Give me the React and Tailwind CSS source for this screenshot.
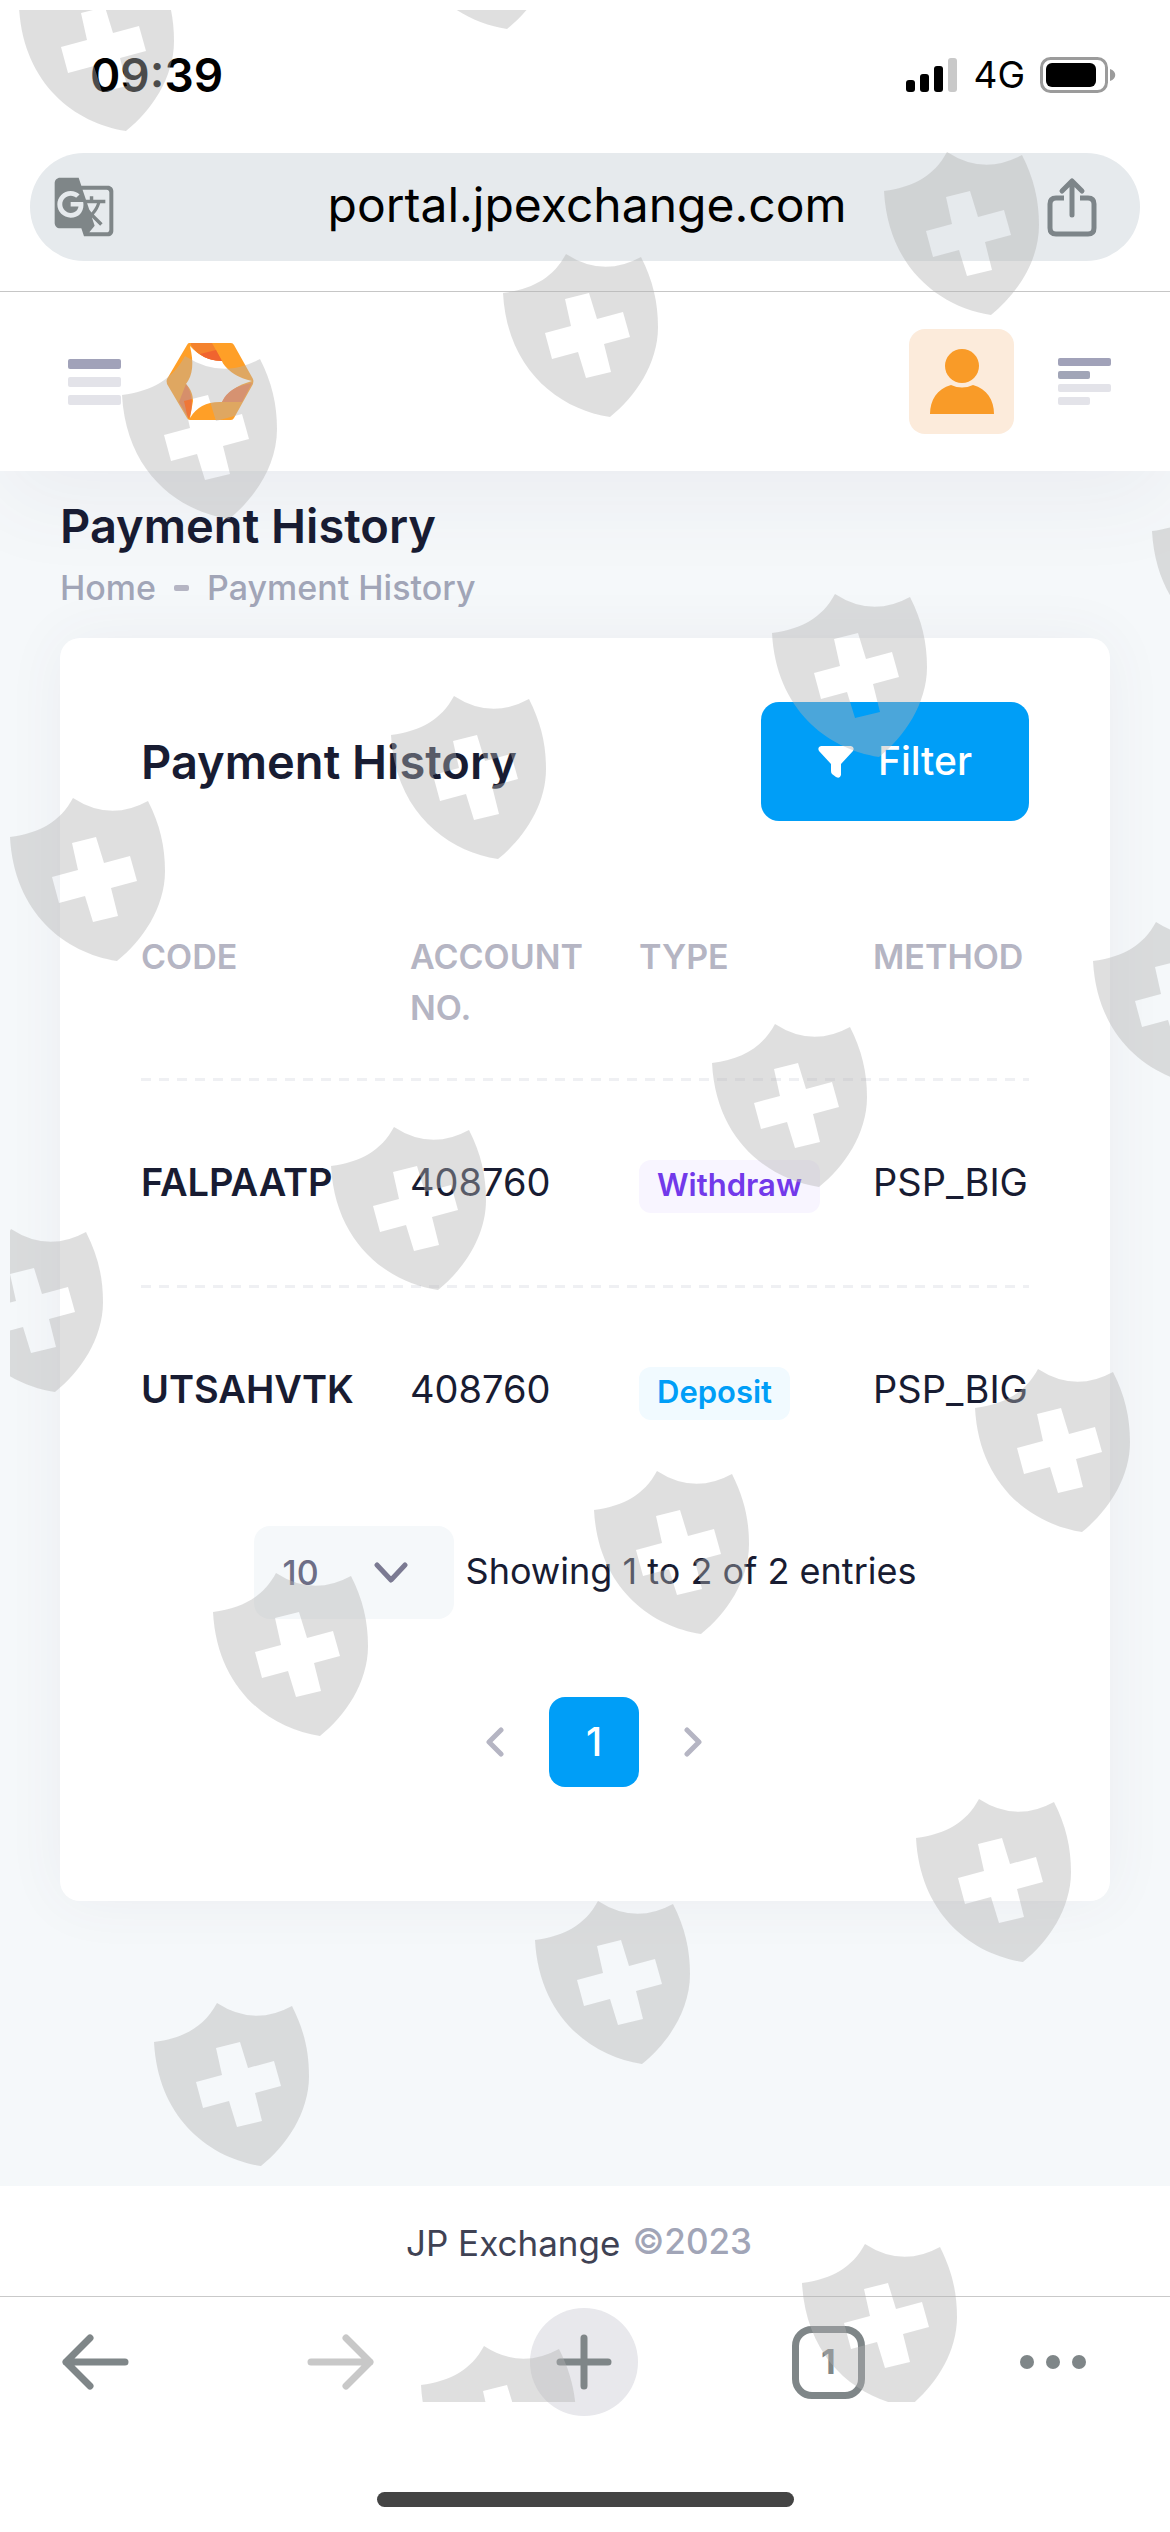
import { useState } from "react";
import { MdGTranslate } from "react-icons/md";

const payments = [
  { code: "FALPAATP", account: "408760", type: "Withdraw", method: "PSP_BIG" },
  { code: "UTSAHVTK", account: "408760", type: "Deposit", method: "PSP_BIG" },
];

const badgeStyles = {
  Withdraw: "bg-[#f8f5ff] text-[#7239ea]",
  Deposit: "bg-[#f1faff] text-[#009ef7]",
};

// top left corner of every shield in the overlay pattern
const shields = [
  [19, -32], [400, -134],
  [884, 152], [503, 254], [122, 356],
  [1152, 492], [772, 594], [391, 696], [10, 798],
  [1093, 922], [712, 1024], [331, 1127], [-52, 1229],
  [975, 1369], [594, 1471], [213, 1573],
  [916, 1799], [535, 1901], [154, 2003],
  [802, 2244], [421, 2346],
];

const ShieldPattern = () => (
  <svg
    className="pointer-events-none absolute left-[10px] top-[10px] z-30 h-[2392px] w-[calc(100%-10px)]"
    aria-hidden="true"
  >
    <g transform="translate(-10 -10)" fill="#b2b2b2" fillOpacity="0.42" fillRule="evenodd">
      {shields.map(([x, y]) => (
        <path
          key={`${x}-${y}`}
          transform={`translate(${x} ${y})`}
          d="M0 39C30 35 50 24 63 0Q100 24 138 3C150 27 155 48 155 73C155 110 132 143 107 163C55 155 4 115 0 39ZM62 45L68 72L42 79L49 105L75 98L83 124L108 118L101 90L127 83L120 58L94 65L86 39Z"
        />
      ))}
    </g>
  </svg>
);

const StatusBar = () => (
  <div className="flex h-[153px] items-center justify-between pb-1 pl-[90px] pr-[54px] text-black">
    <span className="text-[46px] font-semibold leading-none">09:39</span>
    <div className="flex items-center gap-[15px]">
      <svg width="52" height="34" viewBox="0 0 52 34">
        <rect x="0" y="22" width="9" height="12" rx="3" />
        <rect x="14" y="16" width="9" height="18" rx="3" />
        <rect x="28" y="8" width="9" height="26" rx="3" />
        <rect x="42" y="0" width="9" height="34" rx="3" fill="#c9c9c9" />
      </svg>
      <span className="text-[37px] leading-none">4G</span>
      <svg width="76" height="36" viewBox="0 0 76 36">
        <rect x="1.5" y="1.5" width="65" height="33" rx="9" fill="none" stroke="#9b9b9b" strokeWidth="3" />
        <rect x="6" y="6" width="50" height="24" rx="6" />
        <path d="M70 12c7 2 7 10 0 12z" fill="#9b9b9b" />
      </svg>
    </div>
  </div>
);

const AddressBar = () => (
  <div className="relative z-20 border-b border-[#c6c6c6] bg-white px-[30px] pb-[30px]">
    <div className="flex h-[108px] items-center justify-between rounded-full bg-[#e6eaed] pl-[22px] pr-[42px]">
      <button type="button" aria-label="Translate" className="text-[#7f8688]">
        <MdGTranslate className="size-[64px]" />
      </button>
      <span className="pb-1 pl-3 text-[48px] leading-none text-black">portal.jpexchange.com</span>
      <button type="button" aria-label="Share">
        <svg width="52" height="60" viewBox="0 0 52 60" fill="none" stroke="#7d8589" strokeWidth="5" strokeLinecap="round" strokeLinejoin="round">
          <path d="M18 21H10Q4 21 4 27V51Q4 57 10 57H42Q48 57 48 51V27Q48 21 42 21H34" strokeLinecap="butt" />
          <path d="M26 38V5M16 14L26 4L36 14" />
        </svg>
      </button>
    </div>
  </div>
);

const Logo = () => (
  <svg width="88" height="77" viewBox="0 0 88 77">
    <path
      fill="#ff9f27"
      fillRule="evenodd"
      d="M23 0H65Q67 0 68 2L87 36Q88 38 87 41L68 75Q67 77 65 77H24Q22 77 21 75L1 41Q0 38 1 36L21 2Q22 0 23 0ZM24 3C28 20 27 32 20 41C25 46 27 52 27 58L24 75Q34 58 56 59Q64 44 86 38Q66 34 56 19Q36 18 24 3Z"
    />
    <path fill="#fff" d="M24 3Q36 22 58 26L56 18Q36 17 24 3Z" />
    <path fill="#f4822d" d="M25 2Q34 17 56 18L46 0H25Z" />
    <path fill="#f0642f" d="M34 11Q42 18 56 18L50 7Z" />
    <path fill="#f07a43" d="M56 59Q62 44 86 40L76 59Z" />
    <path fill="#ef7638" d="M20 41L13 59L23 76Q30 55 20 41Z" />
  </svg>
);

const PortalHeader = () => (
  <header className="relative z-10 flex h-[179px] items-center justify-between bg-white pl-[68px] pr-[59px] shadow-[0_30px_90px_rgba(82,63,105,0.06)]">
    <div className="flex items-center gap-[45px]">
      <button type="button" aria-label="Open menu" className="flex flex-col gap-2">
        <span className="h-[10px] w-[53px] rounded-xs bg-[#a1a2b9]" />
        <span className="h-[10px] w-[53px] rounded-xs bg-[#e3e3e9]" />
        <span className="h-[10px] w-[53px] rounded-xs bg-[#e3e3e9]" />
      </button>
      <a href="#home" aria-label="JP Exchange">
        <Logo />
      </a>
    </div>
    <div className="flex items-center gap-[44px]">
      <button type="button" aria-label="Account" className="flex size-[105px] items-center justify-center rounded-2xl bg-[#fcebdb]">
        <svg width="64" height="66" viewBox="0 0 64 66" fill="#f99b28">
          <circle cx="32" cy="17" r="17" />
          <path d="M21 36Q32 41 43 36C57 40 64 51 64 65H0C0 51 7 40 21 36Z" />
        </svg>
      </button>
      <button type="button" aria-label="Open toolbar" className="flex flex-col gap-[5px]">
        <span className="h-2 w-[53px] rounded-xs bg-[#a1a2b9]" />
        <span className="h-2 w-8 rounded-xs bg-[#a1a5b7]" />
        <span className="h-2 w-[53px] rounded-xs bg-[#e3e3e9]" />
        <span className="h-2 w-8 rounded-xs bg-[#e3e3e9]" />
      </button>
    </div>
  </header>
);

const PaymentsTable = () => (
  <table className="mt-[65px] w-full table-fixed text-left">
    <thead>
      <tr className="bg-[repeating-linear-gradient(90deg,#eff0f3_0px_10px,transparent_10px_18px)] bg-[length:100%_3px] bg-bottom bg-no-repeat align-top text-[34px] leading-[51px] text-[#b5b5c3]">
        <th className="w-[269px] pb-12 pt-[45px] font-semibold">CODE</th>
        <th className="w-[229px] pb-12 pr-12 pt-[45px] font-semibold">ACCOUNT NO.</th>
        <th className="w-[234px] pb-12 pt-[45px] font-semibold">TYPE</th>
        <th className="pb-12 pt-[45px] font-semibold">METHOD</th>
      </tr>
    </thead>
    <tbody>
      {payments.map((payment) => (
        <tr
          key={payment.code}
          className="h-[207px] bg-[repeating-linear-gradient(90deg,#eff0f3_0px_10px,transparent_10px_18px)] bg-[length:100%_3px] bg-bottom bg-no-repeat align-baseline text-[38px] leading-[58px] text-[#181c32] last:bg-none"
        >
          <td className="pt-[72px] font-semibold">{payment.code}</td>
          <td className="pt-[72px]">{payment.account}</td>
          <td className="pt-[72px]">
            <span className={`inline-block rounded-xl px-[18px] pb-2 pt-[5px] text-[31px] font-semibold leading-10 ${badgeStyles[payment.type]}`}>
              {payment.type}
            </span>
          </td>
          <td className="pt-[72px]">{payment.method}</td>
        </tr>
      ))}
    </tbody>
  </table>
);

const TableFooter = () => {
  const [pageSize, setPageSize] = useState("10");

  return (
    <>
      <div className="mt-[31px] flex items-center justify-center gap-3">
        <div className="relative">
          <select
            aria-label="Entries per page"
            value={pageSize}
            onChange={(e) => setPageSize(e.target.value)}
            className="block h-[93px] w-[200px] appearance-none rounded-2xl bg-[#f5f8fa] pl-[29px] text-[34px] font-medium text-[#6d6e86]"
          >
            <option value="10">10</option>
            <option value="25">25</option>
            <option value="50">50</option>
          </select>
          <svg className="pointer-events-none absolute right-[46px] top-9" width="34" height="22" viewBox="0 0 34 22" fill="none" stroke="#7b7a92" strokeWidth="5" strokeLinecap="round" strokeLinejoin="round">
            <path d="M3 3L17 18L31 3" />
          </svg>
        </div>
        <p className="pb-1 text-[36px] leading-[54px] text-[#181c32]">Showing 1 to 2 of 2 entries</p>
      </div>
      <nav aria-label="Pagination" className="mt-[78px] flex items-center justify-center gap-[45px] pl-[18px]">
        <button type="button" aria-label="Previous page">
          <svg width="18" height="30" viewBox="0 0 18 30" fill="none" stroke="#b5b5c3" strokeWidth="5" strokeLinecap="round" strokeLinejoin="round">
            <path d="M15 3L3 15L15 27" />
          </svg>
        </button>
        <button type="button" aria-current="page" className="size-[90px] rounded-2xl bg-[#009ef7] text-[39px] font-medium text-white">
          1
        </button>
        <button type="button" aria-label="Next page">
          <svg width="18" height="30" viewBox="0 0 18 30" fill="none" stroke="#b5b5c3" strokeWidth="5" strokeLinecap="round" strokeLinejoin="round">
            <path d="M3 3L15 15L3 27" />
          </svg>
        </button>
      </nav>
    </>
  );
};

const BrowserToolbar = () => (
  <div className="border-t border-[#c9c9c9] bg-white pb-[22px] pt-[11px]">
    <div className="flex h-[108px] items-center justify-between pl-[61px] pr-[83px] text-[#7f8688]">
      <button type="button" aria-label="Back" className="pr-6">
        <svg width="68" height="56" viewBox="0 0 68 56" fill="none" stroke="currentColor" strokeWidth="7" strokeLinecap="round" strokeLinejoin="round">
          <path d="M64 28H5M29 4L5 28L29 52" />
        </svg>
      </button>
      <button type="button" aria-label="Forward" className="text-[#c8c8c8]">
        <svg width="68" height="56" viewBox="0 0 68 56" fill="none" stroke="currentColor" strokeWidth="7" strokeLinecap="round" strokeLinejoin="round">
          <path d="M4 28H63M39 4L63 28L39 52" />
        </svg>
      </button>
      <button type="button" aria-label="New tab" className="flex size-[108px] items-center justify-center rounded-full bg-[#e8e8ec]">
        <svg width="56" height="56" viewBox="0 0 56 56" fill="none" stroke="currentColor" strokeWidth="7" strokeLinecap="round">
          <path d="M28 4V52M4 28H52" />
        </svg>
      </button>
      <button type="button" aria-label="Tabs" className="size-[73px] rounded-[20px] border-[7px] border-[#7f8688] text-[34px] font-bold leading-none">
        1
      </button>
      <button type="button" aria-label="More">
        <svg width="68" height="16" viewBox="0 0 68 16" fill="currentColor">
          <circle cx="8" cy="8" r="7" />
          <circle cx="34" cy="8" r="7" />
          <circle cx="60" cy="8" r="7" />
        </svg>
      </button>
    </div>
    <div className="mx-auto mt-[76px] h-[15px] w-[417px] rounded-full bg-[#444444]" />
  </div>
);

export default function App() {
  return (
    <div className="relative min-h-screen overflow-hidden bg-white font-[Inter,sans-serif]">
      <StatusBar />
      <AddressBar />
      <PortalHeader />

      <main className="bg-[#f5f8fa] px-[60px] pb-[285px] pt-[25px]">
        <h1 className="text-[47px] font-semibold leading-[60px] text-[#181c32]">Payment History</h1>
        <nav aria-label="Breadcrumb" className="mt-[7px] flex items-center text-[34px] font-medium leading-[50px] text-[#a1a5b7]">
          <a href="#home">Home</a>
          <span className="mx-[18px] h-[6px] w-[15px] rounded-xs bg-[#b5b5c3]" />
          <span>Payment History</span>
        </nav>

        <section className="mt-[25px] rounded-[20px] bg-white px-[81px] pb-[114px] pt-16 shadow-[0_0_60px_rgba(82,63,105,0.06)]">
          <div className="flex items-center justify-between">
            <h2 className="text-[47px] font-semibold leading-[60px] text-[#181c32]">Payment History</h2>
            <button type="button" className="flex h-[119px] items-center gap-6 rounded-[18px] bg-[#009ef7] px-[57px] text-[39px] font-medium text-white">
              <svg width="36" height="32" viewBox="0 0 36 32" fill="currentColor">
                <path d="M3 0H33Q37 1 35 5L23 18V29Q22 33 18 31L14 28Q13 27 13 25V18L1 5Q-1 1 3 0Z" />
              </svg>
              Filter
            </button>
          </div>
          <PaymentsTable />
          <TableFooter />
        </section>
      </main>

      <footer className="flex h-[110px] items-center justify-center gap-3 bg-white pr-3 pt-1 text-[35px] leading-[54px]">
        <a href="#home" className="text-[#3f4254]">JP Exchange</a>
        <span className="pb-1 font-medium text-[#a1a5b7]">©2023</span>
      </footer>
      <BrowserToolbar />
      <ShieldPattern />
    </div>
  );
}
